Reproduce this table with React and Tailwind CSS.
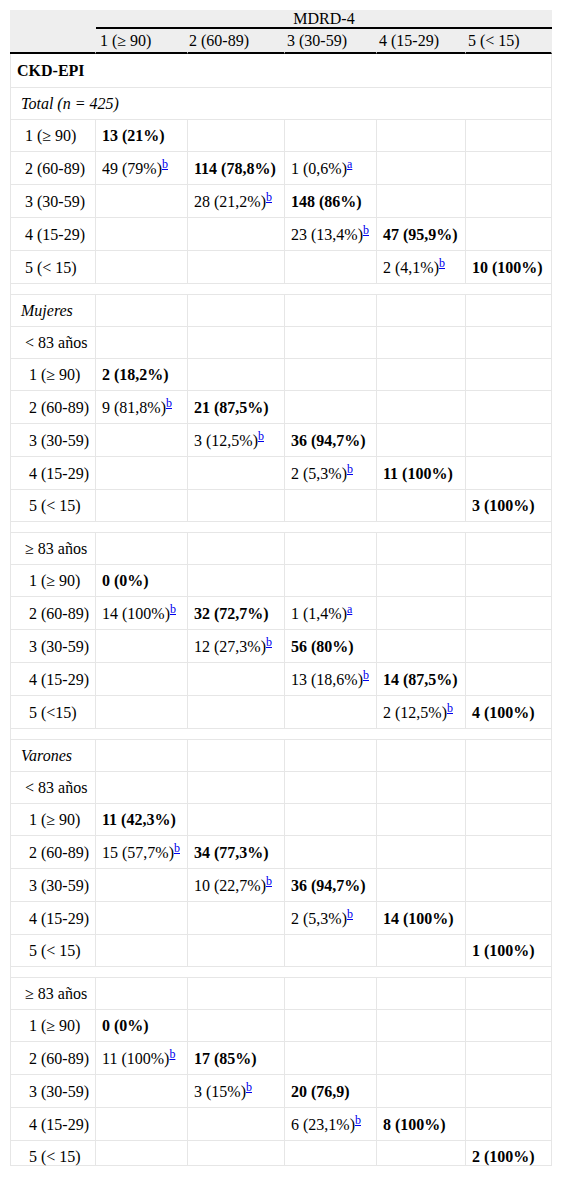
import React from "react";

// light grid line used by every body cell
const line = "border-[#e6e6e6]";

// [label, level, cells] - cell is null, or { t, b (bold), s (footnote letter) }
const groups = [
  {
    title: "Total (n = 425)",
    rows: [
      ["1 (≥ 90)", [{ t: "13 (21%)", b: true }]],
      ["2 (60-89)", [{ t: "49 (79%)", s: "b" }, { t: "114 (78,8%)", b: true }, { t: "1 (0,6%)", s: "a" }]],
      ["3 (30-59)", [null, { t: "28 (21,2%)", s: "b" }, { t: "148 (86%)", b: true }]],
      ["4 (15-29)", [null, null, { t: "23 (13,4%)", s: "b" }, { t: "47 (95,9%)", b: true }]],
      ["5 (< 15)", [null, null, null, { t: "2 (4,1%)", s: "b" }, { t: "10 (100%)", b: true }]],
    ],
  },
  {
    title: "Mujeres",
    sub: "< 83 años",
    rows: [
      ["1 (≥ 90)", [{ t: "2 (18,2%)", b: true }]],
      ["2 (60-89)", [{ t: "9 (81,8%)", s: "b" }, { t: "21 (87,5%)", b: true }]],
      ["3 (30-59)", [null, { t: "3 (12,5%)", s: "b" }, { t: "36 (94,7%)", b: true }]],
      ["4 (15-29)", [null, null, { t: "2 (5,3%)", s: "b" }, { t: "11 (100%)", b: true }]],
      ["5 (< 15)", [null, null, null, null, { t: "3 (100%)", b: true }]],
    ],
  },
  {
    sub: "≥ 83 años",
    rows: [
      ["1 (≥ 90)", [{ t: "0 (0%)", b: true }]],
      ["2 (60-89)", [{ t: "14 (100%)", s: "b" }, { t: "32 (72,7%)", b: true }, { t: "1 (1,4%)", s: "a" }]],
      ["3 (30-59)", [null, { t: "12 (27,3%)", s: "b" }, { t: "56 (80%)", b: true }]],
      ["4 (15-29)", [null, null, { t: "13 (18,6%)", s: "b" }, { t: "14 (87,5%)", b: true }]],
      ["5 (<15)", [null, null, null, { t: "2 (12,5%)", s: "b" }, { t: "4 (100%)", b: true }]],
    ],
  },
  {
    title: "Varones",
    sub: "< 83 años",
    rows: [
      ["1 (≥ 90)", [{ t: "11 (42,3%)", b: true }]],
      ["2 (60-89)", [{ t: "15 (57,7%)", s: "b" }, { t: "34 (77,3%)", b: true }]],
      ["3 (30-59)", [null, { t: "10 (22,7%)", s: "b" }, { t: "36 (94,7%)", b: true }]],
      ["4 (15-29)", [null, null, { t: "2 (5,3%)", s: "b" }, { t: "14 (100%)", b: true }]],
      ["5 (< 15)", [null, null, null, null, { t: "1 (100%)", b: true }]],
    ],
  },
  {
    sub: "≥ 83 años",
    rows: [
      ["1 (≥ 90)", [{ t: "0 (0%)", b: true }]],
      ["2 (60-89)", [{ t: "11 (100%)", s: "b" }, { t: "17 (85%)", b: true }]],
      ["3 (30-59)", [null, { t: "3 (15%)", s: "b" }, { t: "20 (76,9)", b: true }]],
      ["4 (15-29)", [null, null, { t: "6 (23,1%)", s: "b" }, { t: "8 (100%)", b: true }]],
      ["5 (< 15)", [null, null, null, null, { t: "2 (100%)", b: true }]],
    ],
  },
];

const Note = ({ children }) => (
  <sup className="text-[#0000ee] underline">{children}</sup>
);

// full-width row (section titles and the thin gaps between blocks)
const WideRow = ({ children, h = "h-[32px]", pl = "pl-[10px]" }) => (
  <tr>
    <td colSpan={6} className={`${h} ${pl} border-l border-r border-b ${line} align-middle`}>
      {children}
    </td>
  </tr>
);

// row with the six grid cells
const GridRow = ({ label, pl, cells, last }) => {
  const hasNote = cells.some((c) => c && c.s);
  const h = last ? "h-[25px] align-top pt-[7px]" : hasNote ? "h-[33px] align-middle" : "h-[32px] align-middle";
  const filled = [...cells, null, null, null, null, null].slice(0, 5);
  return (
    <tr>
      <td className={`${h} ${pl} border-l border-r border-b ${line}`}>{label}</td>
      {filled.map((c, i) => (
        <td key={i} className={`${h} pl-[6px] border-r border-b ${line} whitespace-nowrap`}>
          {c && (
            <>
              <span className={c.b ? "font-bold" : ""}>{c.t}</span>
              {c.s && <Note>{c.s}</Note>}
            </>
          )}
        </td>
      ))}
    </tr>
  );
};

export default function App() {
  const heads = ["1 (≥ 90)", "2 (60-89)", "3 (30-59)", "4 (15-29)", "5 (< 15)"];
  const headPad = ["pl-[4px]", "pl-[1px]", "pl-[2px]", "pl-[2px]", "pl-[2px]"];

  return (
    <div className="bg-white min-h-[1177px] p-[10px] text-black text-[16px] leading-[17px] font-['Liberation_Serif','Times_New_Roman',serif]">
      <table className="w-[542px] table-fixed border-separate border-spacing-0">
        <colgroup>
          <col className="w-[86px]" />
          <col className="w-[92px]" />
          <col className="w-[97px]" />
          <col className="w-[92px]" />
          <col className="w-[89px]" />
          <col className="w-[86px]" />
        </colgroup>

        {/* Header */}
        <thead className="bg-[#eeeeee] font-normal">
          <tr>
            <th rowSpan={2} className="border-b-2 border-b-black border-r border-r-[#eeeeee]" />
            <th colSpan={5} className="h-[19px] border-b-2 border-black text-center font-normal align-middle">
              MDRD-4
            </th>
          </tr>
          <tr>
            {heads.map((t, i) => (
              <th
                key={t}
                className={`h-[25px] ${headPad[i]} text-left font-normal align-middle border-b-2 border-b-black border-r border-r-[#eeeeee]`}
              >
                {t}
              </th>
            ))}
          </tr>
        </thead>

        {/* Body */}
        <tbody>
          <WideRow h="h-[34px]" pl="pl-[6px]">
            <span className="font-bold">CKD-EPI</span>
          </WideRow>

          {groups.map((g, gi) => (
            <React.Fragment key={gi}>
              {gi > 0 && <WideRow h="h-[11px]" />}
              {gi === 0 && (
                <WideRow pl="pl-[10px]">
                  <i>{g.title}</i>
                </WideRow>
              )}
              {gi > 0 && g.title && (
                <tr>
                  <td className={`h-[32px] pl-[10px] border-l border-r border-b ${line} align-middle`}>
                    <i>{g.title}</i>
                  </td>
                  {[0, 1, 2, 3, 4].map((k) => (
                    <td key={k} className={`border-r border-b ${line}`} />
                  ))}
                </tr>
              )}
              {g.sub && <GridRow label={g.sub} pl="pl-[14px]" cells={[]} />}
              {g.rows.map(([label, cells], ri) => (
                <GridRow
                  key={ri}
                  label={label}
                  pl={g.sub ? "pl-[18px]" : "pl-[14px]"}
                  cells={cells}
                  last={gi === groups.length - 1 && ri === g.rows.length - 1}
                />
              ))}
            </React.Fragment>
          ))}
        </tbody>
      </table>
    </div>
  );
}
